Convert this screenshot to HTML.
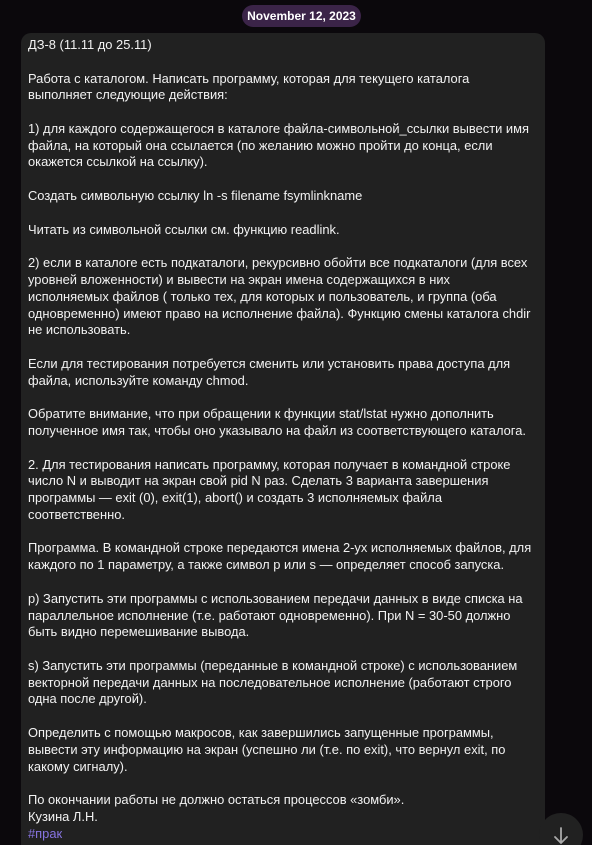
<!DOCTYPE html>
<html><head><meta charset="utf-8"><style>
html,body{margin:0;padding:0;width:592px;height:845px;overflow:hidden;background:#0b080c;}
body{position:relative;font-family:"Liberation Sans","Noto Sans CJK SC",sans-serif;}
.pill{position:absolute;left:242px;top:5px;width:119px;height:22px;border-radius:11px;background:#3b2448;color:#fff;font-size:12px;font-weight:bold;text-align:center;line-height:22px;}
.bubble{position:absolute;left:21px;top:33px;width:524px;height:830px;background:#212121;border-radius:10px;}
.txt{position:absolute;left:28px;top:37px;color:#f2f2f2;font-size:12.9px;line-height:16.78px;white-space:nowrap;}
.tag{color:#8774e1;}
.btn{position:absolute;left:539px;top:813px;width:44px;height:44px;border-radius:50%;background:#212121;}
</style></head><body>
<div class="pill">November 12, 2023</div>
<div class="bubble"></div>
<div class="txt">ДЗ-8 (11.11 до 25.11)<br><br>Работа с каталогом. Написать программу, которая для текущего каталога<br>выполняет следующие действия:<br><br>1) для каждого содержащегося в каталоге файла-символьной_ссылки вывести имя<br>файла, на который она ссылается (по желанию можно пройти до конца, если<br>окажется ссылкой на ссылку).<br><br>Создать символьную ссылку ln -s filename fsymlinkname<br><br>Читать из символьной ссылки см. функцию readlink.<br><br>2) если в каталоге есть подкаталоги, рекурсивно обойти все подкаталоги (для всех<br>уровней вложенности) и вывести на экран имена содержащихся в них<br>исполняемых файлов ( только тех, для которых и пользователь, и группа (оба<br>одновременно) имеют право на исполнение файла). Функцию смены каталога chdir<br>не использовать.<br><br>Если для тестирования потребуется сменить или установить права доступа для<br>файла, используйте команду chmod.<br><br>Обратите внимание, что при обращении к функции stat/lstat нужно дополнить<br>полученное имя так, чтобы оно указывало на файл из соответствующего каталога.<br><br>2. Для тестирования написать программу, которая получает в командной строке<br>число N и выводит на экран свой pid N раз. Сделать 3 варианта завершения<br>программы — exit (0), exit(1), abort() и создать 3 исполняемых файла<br>соответственно.<br><br>Программа. В командной строке передаются имена 2-ух исполняемых файлов, для<br>каждого по 1 параметру, а также символ p или s — определяет способ запуска.<br><br>p) Запустить эти программы с использованием передачи данных в виде списка на<br>параллельное исполнение (т.е. работают одновременно). При N = 30-50 должно<br>быть видно перемешивание вывода.<br><br>s) Запустить эти программы (переданные в командной строке) с использованием<br>векторной передачи данных на последовательное исполнение (работают строго<br>одна после другой).<br><br>Определить с помощью макросов, как завершились запущенные программы,<br>вывести эту информацию на экран (успешно ли (т.е. по exit), что вернул exit, по<br>какому сигналу).<br><br>По окончании работы не должно остаться процессов «зомби».<br>Кузина Л.Н.<br><span class="tag">#прак</span></div>
<div class="btn"><svg width="44" height="44" viewBox="0 0 44 44"><path d="M22 15v15M16 24l6 6 6-6" stroke="#aaa" stroke-width="1.8" fill="none" stroke-linecap="round"/></svg></div>
</body></html>
